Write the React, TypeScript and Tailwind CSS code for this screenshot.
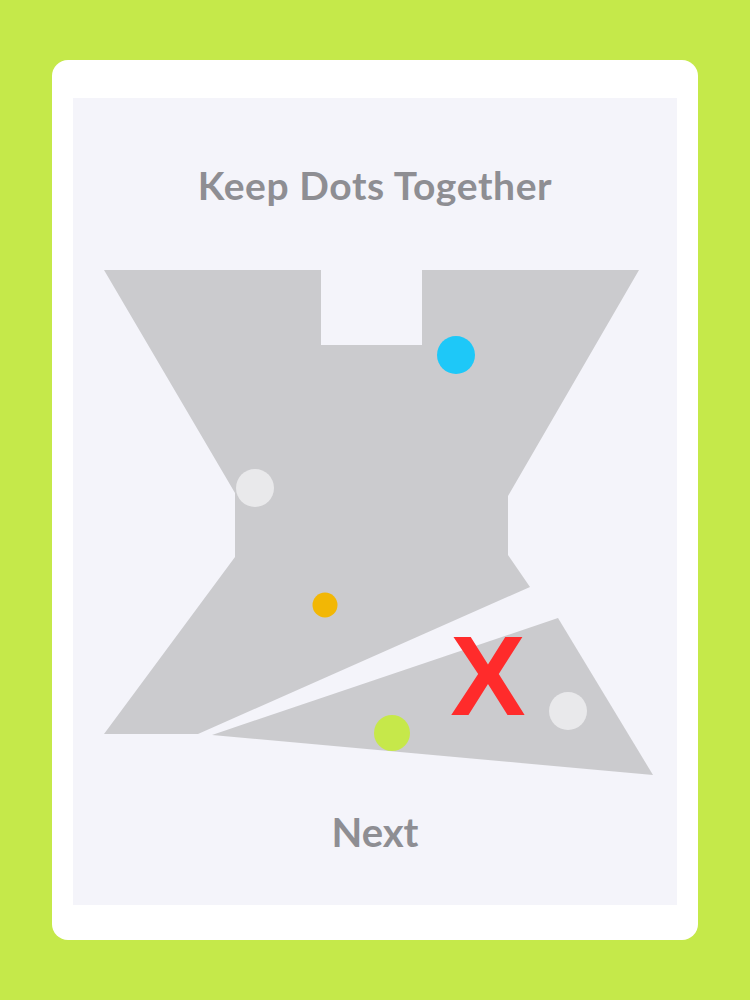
export default function App() {
  return (
    <div className="w-[750px] h-[1000px] bg-[#c5e94a] pt-[60px] pl-[52px]">
      <div className="w-[646px] h-[880px] bg-white rounded-[16px] pt-[38px] px-[21px]">
        <div className="w-[604px] h-[807px] bg-[#f4f4fa] flex flex-col items-center">
          <div
            className="pt-[65px] text-[39px] leading-[44px] font-bold text-[#8e8e93] tracking-[0.6px]"
            style={{ fontFamily: "Lato, 'Open Sans', sans-serif" }}
          >
            Keep Dots Together
          </div>
          <svg width="604" height="601" viewBox="73 207 604 601" className="block">
            <polygon
              points="104,270 321,270 321,345 422,345 422,270 639,270 508,496 508,555 530,587 198,734 104,734 235,557 235,493"
              fill="#cbcbce"
            />
            <polygon points="212,735 558,618 653,775" fill="#cbcbce" />
            <circle cx="456" cy="355" r="19" fill="#1ec8f8" />
            <circle cx="255" cy="488" r="19" fill="#e9e9eb" />
            <circle cx="325" cy="605" r="12.5" fill="#f2b705" />
            <circle cx="392" cy="733" r="18" fill="#c6e84a" />
            <circle cx="568" cy="711" r="19" fill="#e9e9eb" />
            <text
              x="488"
              y="715"
              textAnchor="middle"
              fill="#ff2b2b"
              fontSize="113"
              fontWeight="bold"
              fontFamily="'Liberation Sans', Arial, sans-serif"
            >
              X
            </text>
          </svg>
          <div
            className="text-[40px] leading-[48px] font-bold text-[#8e8e93]"
            style={{ fontFamily: "Lato, 'Open Sans', sans-serif" }}
          >
            Next
          </div>
        </div>
      </div>
    </div>
  );
}
